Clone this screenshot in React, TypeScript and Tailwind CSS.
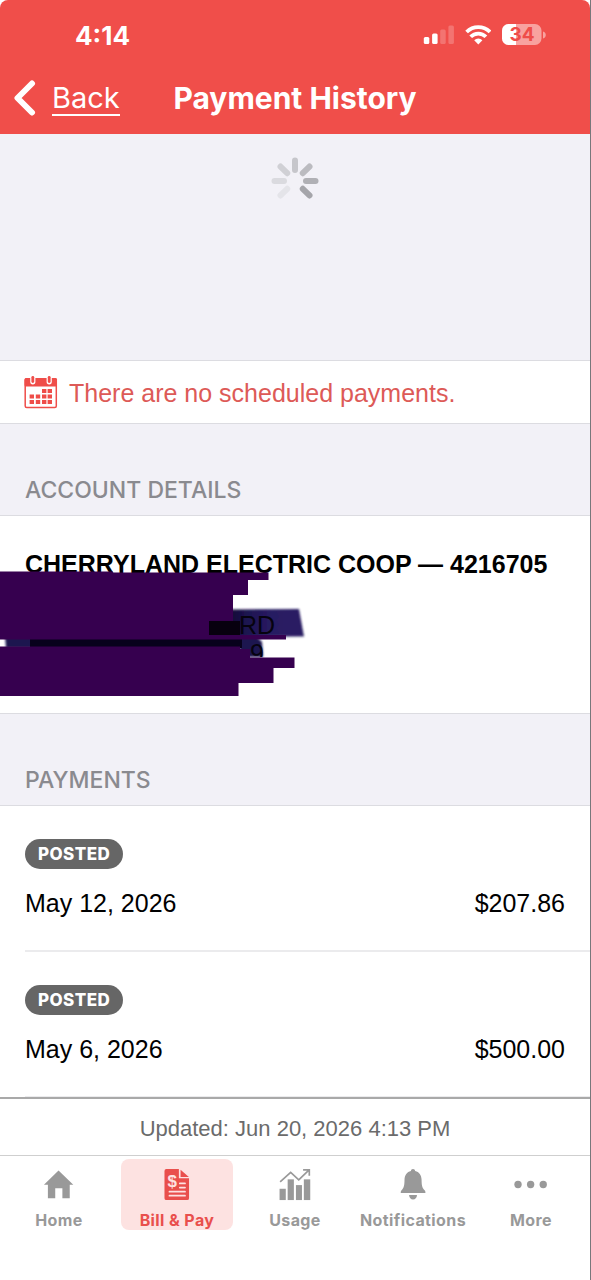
import { ReactNode } from 'react';

const sans = "font-['Liberation_Sans',Arial,sans-serif]";
const inter = "font-['Inter',sans-serif]";

const payments = [
  { status: 'Posted', date: 'May 12, 2026', amount: '$207.86' },
  { status: 'Posted', date: 'May 6, 2026', amount: '$500.00' },
];

// eight-spoke loader, fading anticlockwise; the eighth spoke is invisible
const spokes = [
  { angle: 0, color: '#c6c6cb' },
  { angle: 45, color: '#bbbbc0' },
  { angle: 90, color: '#b0b0b5' },
  { angle: 135, color: '#a5a5aa' },
  { angle: 225, color: '#e4e4e9' },
  { angle: 270, color: '#dadadf' },
  { angle: 315, color: '#d0d0d5' },
];

function Spinner() {
  return (
    <svg viewBox="-24 -24 48 48" className="h-12 w-12" role="img" aria-label="Loading">
      {spokes.map(s => (
        <line key={s.angle} x1="0" y1="-20.5" x2="0" y2="-11" stroke={s.color} strokeWidth="6" strokeLinecap="round" transform={`rotate(${s.angle})`} />
      ))}
    </svg>
  );
}

function StatusIcons() {
  return (
    <div className="flex items-center gap-[11px]">
      <svg viewBox="0 0 31 20" className="h-5 w-[31px]" fill="#fff">
        <rect x="0.8" y="12" width="5.5" height="7" rx="1.5" />
        <rect x="9.1" y="8.5" width="5.5" height="10.5" rx="1.5" />
        <rect x="17.2" y="4.5" width="5.5" height="14.5" rx="1.5" opacity=".22" />
        <rect x="25.4" y="0.5" width="5.5" height="18.5" rx="1.5" opacity=".22" />
      </svg>
      <svg viewBox="0 0 26 20" className="h-5 w-[26px]" fill="none" stroke="#fff" strokeWidth="3.8">
        <path d="M1.6 7 A16.6 16.6 0 0 1 25 7" />
        <path d="M5.7 11.8 A10.6 10.6 0 0 1 20.9 11.8" />
        <path d="M9.2 15.2 A5.8 5.8 0 0 1 17.4 15.2 L13.3 19.4 Z" fill="#fff" stroke="none" />
      </svg>
      <svg viewBox="0 0 44 22" className="h-[22px] w-11">
        <defs>
          <clipPath id="battery"><rect x="0" y="0" width="39.5" height="21" rx="6.5" /></clipPath>
        </defs>
        <g clipPath="url(#battery)">
          <rect width="40" height="22" fill="#f8a29f" />
          <rect width="14" height="22" fill="#fff" />
        </g>
        <path d="M41 7.5 a3.6 3.6 0 0 1 0 7 Z" fill="#f8a29f" />
        <text x="20" y="17" textAnchor="middle" fontSize="19" fontWeight="700" fill="#ef4d49" fontFamily="Inter, sans-serif">34</text>
      </svg>
    </div>
  );
}

function CalendarIcon() {
  const cells = [
    [18, 14], [23.6, 14],
    [5.6, 19.5], [11.8, 19.5], [18, 19.5], [23.6, 19.5],
    [5.6, 25], [11.8, 25], [18, 25], [23.6, 25],
  ];
  return (
    <svg viewBox="0 0 34 34" className="h-[34px] w-[34px] shrink-0">
      <rect x="1.2" y="3.7" width="31.1" height="28.8" rx="1.5" fill="#fff" stroke="#ef4d49" strokeWidth="1.5" />
      <rect x="0.5" y="3" width="32.5" height="8.5" rx="1.5" fill="#ef4d49" />
      {[8.8, 25.2].map(x => (
        <g key={x} strokeLinecap="round">
          <line x1={x} y1="2.8" x2={x} y2="6.8" stroke="#fff" strokeWidth="5.2" />
          <line x1={x} y1="2.3" x2={x} y2="6.6" stroke="#ef4d49" strokeWidth="2.8" />
        </g>
      ))}
      {cells.map(([x, y]) => <rect key={`${x}-${y}`} x={x} y={y} width="4.4" height="4" fill="#ef4d49" />)}
    </svg>
  );
}

const HomeIcon = () => (
  <svg viewBox="0 0 34 34" className="h-[34px] w-[34px]" fill="currentColor">
    <path d="M16.5 1.5 L32.2 16.8 H28.4 V31 H20.6 V20.5 H13 V31 H5.2 V16.8 H1 Z" />
  </svg>
);

const BillIcon = () => (
  <svg viewBox="0 0 34 34" className="h-[34px] w-[34px]">
    <path d="M5.7 0 H19 V9.7 H29.8 V31 a2 2 0 0 1-2 2 H5.7 a2 2 0 0 1-2-2 V2 a2 2 0 0 1 2-2 Z" fill="currentColor" />
    <path d="M20.8 0.8 L29.6 8.4 H20.8 Z" fill="currentColor" />
    <g stroke="#fde2e1" strokeWidth="1.9" strokeLinecap="round">
      <path d="M20 15.3 H25.5 M20 19.7 H25.5 M9 24.1 H25.5 M9 28.3 H25.5" />
    </g>
    <text x="12.2" y="18.6" textAnchor="middle" fontSize="18" fontWeight="700" fill="#fde2e1" fontFamily="Liberation Sans, sans-serif">$</text>
  </svg>
);

const UsageIcon = () => (
  <svg viewBox="0 0 34 34" className="h-[34px] w-[34px]" fill="currentColor">
    <rect x="0.6" y="21" width="6.6" height="12" />
    <rect x="9.2" y="11" width="6.6" height="22" />
    <rect x="18" y="17.1" width="6.4" height="15.9" />
    <rect x="26.4" y="11" width="6.8" height="22" />
    <path d="M1.2 13.7 L12.4 3.7 L21 11.5 L32 0.9 M25.6 0.9 H32.2 V7.3" fill="none" stroke="currentColor" strokeWidth="1.8" />
  </svg>
);

const BellIcon = () => (
  <svg viewBox="0 0 34 34" className="h-[34px] w-[34px]" fill="currentColor">
    <path d="M17 0 C18.3 0 19.2 1 19.3 2.2 C23.6 3.2 26 6.7 26.1 11.2 C26.2 17.2 26.6 19.9 29.3 22.5 C30.2 23.4 30.2 24 30.2 25.5 H4 C4 24 4 23.4 4.9 22.5 C7.5 19.9 7.9 17.2 8 11.2 C8.1 6.7 10.5 3.2 14.8 2.2 C14.8 1 15.7 0 17 0 Z" />
    <path d="M12.8 27.6 H21.3 C21 30.6 19.4 32.3 17 32.3 C14.7 32.3 13.1 30.6 12.8 27.6 Z" />
  </svg>
);

const MoreIcon = () => (
  <svg viewBox="0 0 36 34" className="h-[34px] w-9" fill="currentColor">
    <circle cx="4.2" cy="16.5" r="3.9" />
    <circle cx="17.6" cy="16.5" r="3.9" />
    <circle cx="31" cy="16.5" r="3.9" />
  </svg>
);

const tabs: { label: string; icon: ReactNode; active?: boolean }[] = [
  { label: 'Home', icon: <HomeIcon /> },
  { label: 'Bill & Pay', icon: <BillIcon />, active: true },
  { label: 'Usage', icon: <UsageIcon /> },
  { label: 'Notifications', icon: <BellIcon /> },
  { label: 'More', icon: <MoreIcon /> },
];

// marker strokes drawn over the address lines
function Redaction() {
  return (
    <svg viewBox="0 516 310 197" className="absolute top-0 left-0 h-[197px] w-[310px]">
      <defs>
        <filter id="soft" x="-10%" y="-20%" width="120%" height="140%"><feGaussianBlur stdDeviation="1.1" /></filter>
        <linearGradient id="ink" x1="0" x2="1">
          <stop offset="0" stopColor="#0c0626" />
          <stop offset="0.3" stopColor="#1d1350" />
          <stop offset="0.6" stopColor="#281b62" />
          <stop offset="1" stopColor="#2b2064" />
        </linearGradient>
        <clipPath id="line"><rect x="230" y="636" width="60" height="21" /></clipPath>
      </defs>
      <path d="M222 609.5 L299 609 L304 636.5 L222 637 Z" fill="url(#ink)" filter="url(#soft)" />
      <path d="M5 636 H256 L262 642 L263 657 H240 V648 H6 Z" fill="#1b1450" filter="url(#soft)" />
      <rect x="30" y="638" width="212" height="10" fill="#07011c" />
      <rect x="209" y="621" width="31" height="14" fill="#07000f" />
      <g fill="#06030f" fontSize="25" fontFamily="Liberation Sans, Arial, sans-serif">
        <text x="239" y="634">RD</text>
        <text x="250" y="662" clipPath="url(#line)">9</text>
      </g>
      <path d="M0 571.5 H113 V572.5 H268.5 V580 H248 V595 H233 V621 H209 V635 H286 V639.5 H0 Z" fill="#36004f" />
      <path d="M0 646.5 H240 V649 H250 V657.5 H294.5 V668 H273.5 V683 H238.5 V696 H0 Z" fill="#36004f" />
    </svg>
  );
}

function SectionTitle({ children }: { children: ReactNode }) {
  return (
    <h2 className={`${inter} flex h-[92px] items-end border-b border-[#dcdce1] px-[25px] pb-[11px] text-[23px] leading-7 font-medium text-[#8a8a8f] uppercase`}>
      {children}
    </h2>
  );
}

export default function App() {
  return (
    <div className={`${sans} flex min-h-screen flex-col border-r border-[#77777b] bg-white text-black`}>
      <header className={`${inter} rounded-t-lg bg-[#f04e4a] text-white`}>
        <div className="flex h-[62px] items-center justify-between pt-2 pr-[44px] pl-[75px]">
          <span className="text-[26px] font-bold">4:14</span>
          <StatusIcons />
        </div>
        <div className="grid h-[72px] grid-cols-[1fr_auto_1fr] items-center px-3">
          <button className="flex items-center gap-4 text-[29px]">
            <svg viewBox="0 0 24 36" className="h-9 w-6" fill="none" stroke="currentColor" strokeWidth="6" strokeLinecap="round" strokeLinejoin="round">
              <path d="M20 3.5 L5.5 18 L20 32.5" />
            </svg>
            <span className="border-b-2 pt-px leading-8">Back</span>
          </button>
          <h1 className="text-[30px] font-bold">Payment History</h1>
        </div>
      </header>

      <main className="flex-1 bg-[#f2f1f7]">
        <div className="flex h-[226px] justify-center pt-[23px]">
          <Spinner />
        </div>

        <div className="flex h-16 items-center gap-[11px] border-y border-[#dcdce1] bg-white px-6 text-[25px] text-[#dd5a57]">
          <CalendarIcon />
          <p className="pt-1">There are no scheduled payments.</p>
        </div>

        <SectionTitle>Account Details</SectionTitle>
        <div className="relative h-[198px] border-b border-[#dcdce1] bg-white px-[25px] pt-8">
          <p className="text-[25px] leading-8 font-bold">CHERRYLAND ELECTRIC COOP — 4216705</p>
          <Redaction />
        </div>

        <SectionTitle>Payments</SectionTitle>
        <ul className="bg-white pl-[25px]">
          {payments.map(p => (
            <li key={p.date} className="border-b-2 border-[#ebebed] pt-[33px] pr-[25px] pb-[29px] last:border-b">
              <span className={`${inter} block h-[30px] w-fit rounded-full bg-[#666] px-[13px] text-[17px] leading-[30px] font-extrabold tracking-wide text-white uppercase`}>{p.status}</span>
              <div className="mt-4 flex justify-between text-[25px] leading-9">
                <span>{p.date}</span>
                <span>{p.amount}</span>
              </div>
            </li>
          ))}
        </ul>
      </main>

      <footer className="sticky bottom-0 bg-white">
        <p className="border-t-2 border-[#a9a9a9] pt-[14px] pb-[10px] text-center text-[22px] leading-8 text-[#6b6b6b]">Updated: Jun 20, 2026 4:13 PM</p>
        <nav className="grid h-[125px] grid-cols-5 items-start border-t border-[#cfcfcf] pt-[3px]">
          {tabs.map(t => (
            <a
              key={t.label}
              href="#"
              aria-current={t.active ? 'page' : undefined}
              className={`${inter} mx-[3px] flex h-[71px] flex-col items-center rounded-lg pt-[10px] text-base leading-5 font-bold tracking-wide ${t.active ? 'bg-[#fde2e1] text-[#e94f4c]' : 'text-[#999]'}`}
            >
              {t.icon}
              <span className="mt-[9px]">{t.label}</span>
            </a>
          ))}
        </nav>
      </footer>
    </div>
  );
}
